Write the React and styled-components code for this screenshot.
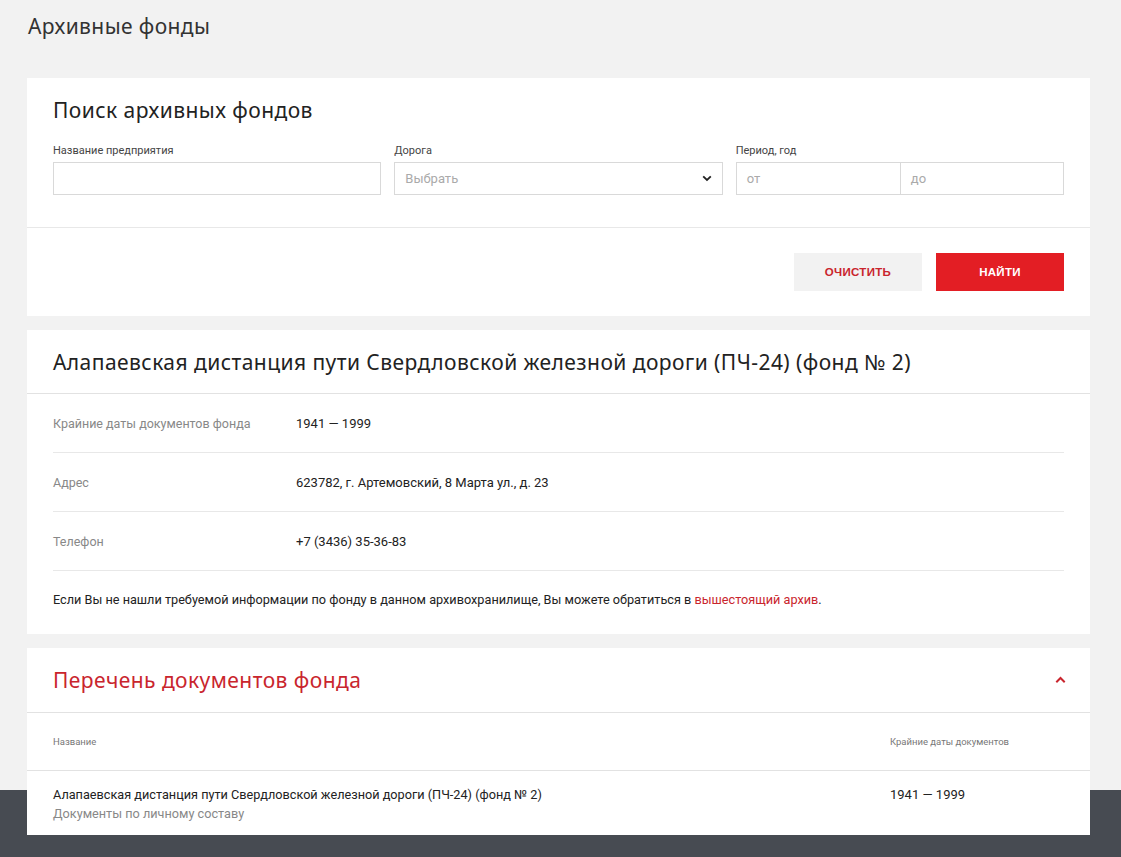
import React from 'react';
import styled, { createGlobalStyle } from 'styled-components';

const Global = createGlobalStyle`
  html, body { margin: 0; padding: 0; background: #f2f2f2; }
  body { font-family: Roboto, "Noto Sans", sans-serif; color: #222; }
  * { box-sizing: border-box; }
`

const Page = styled.div`
  min-height: 857px;
  display: flex;
  flex-direction: column;
`

const Main = styled.main`
  padding: 14px 31px 0 27px;
  display: flex;
  flex-direction: column;
  gap: 14px;
  position: relative;
  z-index: 1;
`

const PageTitle = styled.h1`
  margin: 0 0 26px 1px;
  font-family: "Noto Sans", sans-serif;
  font-weight: 400;
  font-size: 21px;
  letter-spacing: 0.4px;
  line-height: 24px;
  color: #333;
`

const Card = styled.section`
  background: #fff;
`

const CardHead = styled.div`
  display: flex;
  align-items: center;
  justify-content: space-between;
  height: ${p => p.h || 64}px;
  padding: 0 26px;
  border-bottom: ${p => (p.noLine ? 'none' : '1px solid #e2e2e2')};
`

const CardTitle = styled.h2`
  margin: 0;
  font-family: "Noto Sans", sans-serif;
  font-weight: 400;
  font-size: 21px;
  letter-spacing: 0.45px;
  color: ${p => (p.red ? '#c9252d' : '#222')};
`

const Fields = styled.div`
  display: grid;
  grid-template-columns: repeat(3, 1fr);
  gap: 13px;
  padding: 2px 26px 32px;
`

const Field = styled.label`
  display: flex;
  flex-direction: column;
  gap: 5px;
  font-size: 11px;
  line-height: 13px;
  color: #444;
`

const Box = styled.div`
  height: 33px;
  border: 1px solid #d9d9d9;
  display: flex;
  align-items: center;
  justify-content: space-between;
  padding: 0 10px;
  font-size: 13px;
  color: #aaa;
`

const Split = styled.div`
  display: grid;
  grid-template-columns: 1fr 1fr;
  height: 33px;
  border: 1px solid #d9d9d9;
`

const Half = styled.div`
  display: flex;
  align-items: center;
  padding: 0 10px;
  font-size: 13px;
  color: #aaa;
  & + & { border-left: 1px solid #d9d9d9; }
`

const Actions = styled.div`
  display: flex;
  justify-content: flex-end;
  gap: 14px;
  border-top: 1px solid #e8e8e8;
  padding: 25px 26px 25px;
`

const Button = styled.button`
  width: 128px;
  height: 38px;
  border: none;
  font-family: "Liberation Sans", Arial, sans-serif;
  font-weight: 700;
  font-size: 11.5px;
  letter-spacing: 0.3px;
  background: ${p => (p.primary ? '#e31e24' : '#f2f2f2')};
  color: ${p => (p.primary ? '#fff' : '#c9252d')};
`

const InfoList = styled.div`
  padding: 0 26px;
`

const InfoRow = styled.div`
  display: grid;
  grid-template-columns: 243px 1fr;
  align-items: center;
  height: 59px;
  border-bottom: 1px solid #e8e8e8;
  font-size: 13px;
`

const Label = styled.span`
  color: #888;
  font-size: 12.5px;
`

const Value = styled.span`
  color: #222;
`

const Note = styled.p`
  margin: 0;
  padding: 21px 26px 26px;
  font-size: 12.7px;
  line-height: 16px;
  color: #222;
  & a { color: #c9252d; text-decoration: none; }
`

const TableHead = styled.div`
  display: grid;
  grid-template-columns: 837px 1fr;
  align-items: center;
  height: 58px;
  padding: 0 26px;
  border-bottom: 1px solid #e2e2e2;
  font-size: 9.5px;
  color: #777;
`

const TableRow = styled.div`
  display: grid;
  grid-template-columns: 837px 1fr;
  padding: 14px 26px 12px;
  font-size: 12.7px;
  line-height: 19px;
`

const Dates = styled.div`
  font-size: 13px;
`

const Sub = styled.div`
  color: #888;
`

const Chevron = styled.svg`
  margin-right: -2px;
`

const Footer = styled.footer`
  flex: 1;
  margin-top: -45px;
  min-height: 68px;
  background: #474b52;
`

export default function App() {
  return (
    <Page>
      <Global />
      <Main>
        <PageTitle>Архивные фонды</PageTitle>
        <Card>
          <CardHead noLine>
            <CardTitle>Поиск архивных фондов</CardTitle>
          </CardHead>
          <Fields>
            <Field>
              Название предприятия
              <Box />
            </Field>
            <Field>
              Дорога
              <Box>
                Выбрать
                <svg width="10" height="7" viewBox="0 0 10 7">
                  <path d="M1.2 1.3 L5 5 L8.8 1.3" fill="none" stroke="#222" strokeWidth="1.8" />
                </svg>
              </Box>
            </Field>
            <Field>
              Период, год
              <Split>
                <Half>от</Half>
                <Half>до</Half>
              </Split>
            </Field>
          </Fields>
          <Actions>
            <Button>ОЧИСТИТЬ</Button>
            <Button primary>НАЙТИ</Button>
          </Actions>
        </Card>

        <Card>
          <CardHead>
            <CardTitle>Алапаевская дистанция пути Свердловской железной дороги (ПЧ-24) (фонд № 2)</CardTitle>
          </CardHead>
          <InfoList>
            <InfoRow>
              <Label>Крайние даты документов фонда</Label>
              <Value>1941 — 1999</Value>
            </InfoRow>
            <InfoRow>
              <Label>Адрес</Label>
              <Value>623782, г. Артемовский, 8 Марта ул., д. 23</Value>
            </InfoRow>
            <InfoRow>
              <Label>Телефон</Label>
              <Value>+7 (3436) 35-36-83</Value>
            </InfoRow>
          </InfoList>
          <Note>
            Если Вы не нашли требуемой информации по фонду в данном архивохранилище, Вы можете обратиться в{' '}
            <a href="#">вышестоящий архив</a>.
          </Note>
        </Card>

        <Card>
          <CardHead h={65}>
            <CardTitle red>Перечень документов фонда</CardTitle>
            <Chevron width="11" height="8" viewBox="0 0 11 8">
              <path d="M1.3 6.2 L5.5 2 L9.7 6.2" fill="none" stroke="#c9252d" strokeWidth="2" />
            </Chevron>
          </CardHead>
          <TableHead>
            <span>Название</span>
            <span>Крайние даты документов</span>
          </TableHead>
          <TableRow>
            <div>
              Алапаевская дистанция пути Свердловской железной дороги (ПЧ-24) (фонд № 2)
              <Sub>Документы по личному составу</Sub>
            </div>
            <Dates>1941 — 1999</Dates>
          </TableRow>
        </Card>
      </Main>
      <Footer />
    </Page>
  );
}
